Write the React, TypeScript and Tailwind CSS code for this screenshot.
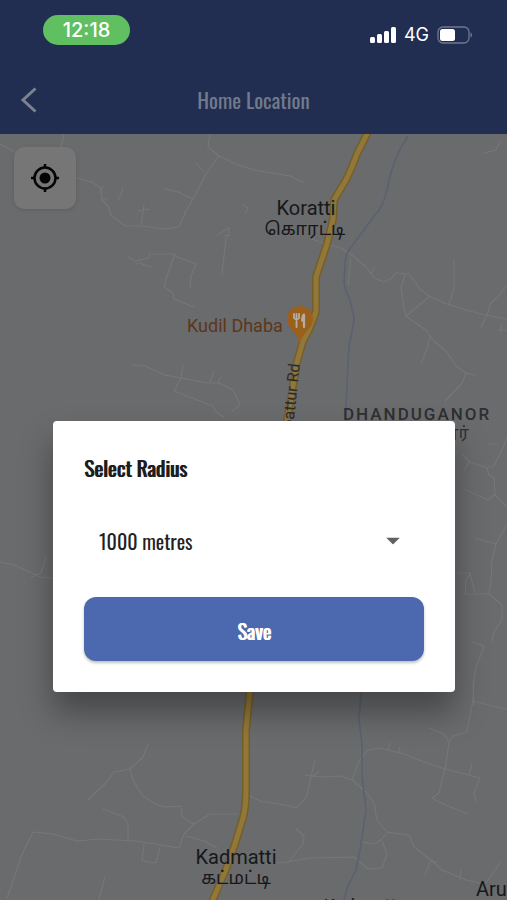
import { useState } from "react";
import type { FormEvent } from "react";

const RADII = ["500 metres", "1000 metres", "2000 metres", "5000 metres"];

const CONDENSED = "font-['Oswald','Liberation_Sans_Narrow','Roboto',sans-serif]";

const HIGHWAY =
  "M368 132 L357 154 Q352 168 346 180 L334 200 L333 219 L327 244 L316 277 L316 311 Q311 328 303 341 L297 362 L288 415 L262 600 L250 690 L246 730 L246 789 Q246 807 243 818 L235 844 L226 869 L212 902";

const LANES = [
  "M0 144 L15 152 L22 156",
  "M64 134 L61 147",
  "M77 178 L92 182 L101 188 L102 200 L108 206 L111 215 L125 226 L142 226 L165 229 L179 227 L186 211 L193 199 L206 174 L219 156",
  "M100 192 L103 186 M102 199 L108 199 M118 200 L122 192 L123 187",
  "M210 134 L208 147 L219 156 L236 164 L254 170 L290 176 L303 182",
  "M165 189 L178 192 L193 199 M196 163 L204 172",
  "M139 211 L149 209 M144 205 L141 226 M243 205 L248 208 L245 214",
  "M217 235 L229 228 L229 236 L224 235 M226 237 L222 275",
  "M128 257 L134 260 L137 264 M136 261 L149 258 L149 254 L175 254 L172 262 L167 276 L164 287 L173 293 L174 299 L194 307",
  "M175 256 L196 264 L191 276 L190 288 M139 263 L151 267",
  "M133 365 L145 366 L165 375 L181 378 L208 383 L219 383 L233 390 L240 405 L232 411",
  "M181 378 L174 391 L213 406 L216 412 L224 417 M181 378 L183 365 M210 382 L214 371 M218 382 L221 377",
  "M484 153 L496 150 L500 142",
  "M311 239 L327 244 L341 248 L353 256 L366 267 L374 278 L384 282 L392 278 L396 273 L409 274 L420 289 L429 296 L447 304 L466 310 L485 315 L507 319",
  "M351 258 L348 285 M371 274 L374 268 M405 275 L401 288 L404 307 L406 316 L429 297",
  "M406 316 L427 331 L434 341 L447 352 L456 366 L466 373 L462 383 L445 401 M466 373 L475 375",
  "M430 337 L427 349 L421 364 M454 260 L454 289 L449 304 M507 285 L498 297 L491 303 L487 315 L481 327",
  "M501 324 L501 332 M507 330 L498 330",
  "M470 461 L464 471 M463 455 L470 462 L487 468 L494 466 L502 450 L507 438 M488 444 L496 444",
  "M487 468 L489 475 L494 478 L495 495 L507 507 M464 489 L488 500 L494 495 M475 538 L496 544 L507 524 M496 544 L492 560 L491 580 L489 594 L465 594 L466 580 L470 574 L475 593",
  "M458 573 L471 573 M489 594 L502 605 L502 620 L494 632 L492 642 M472 642 L484 646 L476 668 L473 684 L474 706",
  "M0 562 L14 565 L40 577 L53 578 M31 577 L41 573 L46 557",
  "M148 744 L143 757 L130 769 L114 772 L106 783 L96 792 L88 800",
  "M130 769 L134 782 L143 796 L154 803 L164 807 L181 806 L182 817 L194 824 L184 834 L179 848 L155 844 L135 841 L99 839 L77 841 L53 834 L33 832 L23 852 L7 898",
  "M103 809 L124 817 L128 825 L128 841 M144 844 L142 861 L156 863 L160 848 M194 824 L210 814 L242 814",
  "M186 836 L204 841 L217 848 M105 877 L99 899 M248 795 L260 801 L285 805 L296 808 L307 796 L311 776 L315 760",
  "M305 775 L320 777 L340 776 L352 780 L359 761 L368 750 L380 748 L404 754 L424 762 L445 769 L469 775 L480 778 L474 793 L476 802",
  "M311 777 L319 772 M388 750 L390 743 M398 753 L400 747 M469 775 L472 764 M429 728 L444 734 L449 742 L446 764 L439 793 L432 798 L443 804 L468 814",
  "M352 780 L366 792 L374 803 L377 820 L387 832 L409 835 L414 847 L431 860 L442 870 L466 880 L485 884 L500 863",
  "M362 842 L375 844 L382 839 L388 832 M382 841 L387 854 L382 868 L368 869 L354 857 L309 858 L288 862 L260 864",
  "M289 861 L303 844 L304 836 L296 829 M449 742 L453 736 L467 732 L473 700 L474 680 M474 701 L492 706 L507 709",
  "M425 875 L430 862 L437 862 M460 879 L461 870",
];

function SignalIcon() {
  return (
    <svg className="h-4 w-6.5" viewBox="0 0 26 16" fill="white" aria-label="Signal">
      <rect x="0" y="10" width="5" height="6" rx="1.5" />
      <rect x="7" y="7" width="5" height="9" rx="1.5" />
      <rect x="14" y="4" width="5" height="12" rx="1.5" />
      <rect x="21" y="0" width="5" height="16" rx="1.5" />
    </svg>
  );
}

function BatteryIcon() {
  return (
    <svg className="h-[18px] w-9" viewBox="0 0 36 18" aria-label="Battery">
      <rect x="1" y="1" width="31" height="16" rx="5" fill="none" stroke="#6f7890" strokeWidth="1.3" />
      <rect x="3" y="3" width="15" height="12" rx="2.5" fill="white" />
      <path d="M33.5 6.5 C35.5 7 35.5 11 33.5 11.5 Z" fill="#6f7890" />
    </svg>
  );
}

function MapCanvas() {
  return (
    <svg
      className="absolute inset-0 h-full w-full font-['Roboto','Noto_Sans_Tamil',sans-serif]"
      viewBox="0 134 507 766"
      preserveAspectRatio="xMidYMin slice"
      role="img"
      aria-label="Map"
    >
      <g fill="none" strokeLinejoin="round" strokeLinecap="round">
        <path d={LANES.join(" ")} stroke="#757779" strokeWidth="1.1" />
        <path
          d="M408 136 L398 153 L391 172 L387 190 Q383 207 375 215 L349 250 Q345 256 345 265 L344 282 Q344 288 350 300 L354 317 Q354 325 349 345 L346 405 L352 560 L361 693 L359 720 L362 745 L362 775 L366 810 L363 830 L360 850 L356 870 L347 888 L344 900"
          stroke="#5a6170"
          strokeWidth="1.6"
        />
        <path d={HIGHWAY} stroke="#765e2a" strokeWidth="8" />
        <path d={HIGHWAY} stroke="#927838" strokeWidth="5" />
      </g>

      <path
        d="M300 306 C292.500 306 287 311.500 287 319 C287 329 297 331 300 344 C303 331 313 329 313 319 C313 311.500 307.500 306 300 306 Z"
        fill="#9b601b"
      />
      <g fill="none" stroke="#b6ada3" strokeLinecap="round">
        <path d="M294 314 V318 M296.500 314 V318 M299 314 V318 M294 318 Q296.500 321 299 318 M296.500 319 V327" strokeWidth="1.800" />
        <path d="M304 315 V327" strokeWidth="2.200" />
        <path d="M304 314 Q301.500 316 302 321 H304" strokeWidth="1.500" fill="#b6ada3" />
      </g>

      <g fontSize="20" textAnchor="middle" fill="#17181a" stroke="#6a6b6d" strokeWidth="1" paintOrder="stroke">
        <text x="306" y="215">Koratti</text>
        <text x="305" y="235" fontSize="18">கொரட்டி</text>
        <text x="236" y="864">Kadmatti</text>
        <text x="236" y="884" fontSize="18">கட்மட்டி</text>
        <text x="476" y="896" textAnchor="start">Aru</text>
        <text x="365" y="912" fontSize="18">Kudapattu</text>
      </g>
      <text x="187" y="332" fontSize="18" fill="#5c371b">Kudil Dhaba</text>
      <text transform="translate(300 364) rotate(-84)" textAnchor="end" fontSize="16" fill="#33291a" stroke="#6a6b6d" strokeWidth="1" paintOrder="stroke">
        Tirupattur Rd
      </text>
      <g fill="#2e2f31" fontSize="17">
        <text x="343" y="420" className="font-medium tracking-[2px]">DHANDUGANOR</text>
        <text x="469" y="438" fontSize="16" textAnchor="end">தண்டுகனூர்</text>
      </g>
    </svg>
  );
}

function RadiusDialog() {
  const [radius, setRadius] = useState("1000 metres");
  const save = (event: FormEvent) => event.preventDefault();

  return (
    <form
      role="dialog"
      aria-labelledby="radius-label"
      onSubmit={save}
      className={`relative w-full rounded bg-white p-[31px] shadow-[0_20px_32px_0_rgba(0,0,0,0.35)] ${CONDENSED}`}
    >
      <label
        id="radius-label"
        htmlFor="radius"
        className="block text-[21px] leading-8 text-[#1d1d1d] [text-shadow:1px_0_0_currentColor]"
      >
        Select Radius
      </label>
      <div className="relative mt-7 mb-[27px]">
        <select
          id="radius"
          value={radius}
          onChange={(event) => setRadius(event.target.value)}
          className="h-[58px] w-full appearance-none bg-transparent px-[15px] text-[20px] text-[#222222] outline-none"
        >
          {RADII.map((option) => (
            <option key={option}>{option}</option>
          ))}
        </select>
        <svg className="pointer-events-none absolute top-1/2 right-6 h-[7px] w-[14px] -translate-y-1/2" viewBox="0 0 14 7" fill="#616161">
          <path d="M0 0 H14 L7 7 Z" />
        </svg>
      </div>
      <button
        type="submit"
        className="block h-16 w-full rounded-xl bg-[#4c69b0] pt-1 text-[20px] text-white shadow-[0_2px_3px_rgba(0,0,0,0.25)]"
      >
        <span className="[text-shadow:1px_0_0_currentColor]">Save</span>
      </button>
    </form>
  );
}

export default function App() {
  return (
    <div className="relative flex min-h-screen flex-col overflow-hidden bg-[#6a6b6d] font-['Inter','Liberation_Sans',sans-serif]">
      <header className="bg-[#212e52]">
        <div className="flex h-[66px] items-start justify-between pt-[15px] pr-[34px] pl-[43px]">
          <time className="flex h-[30px] w-[87px] items-center justify-center rounded-full bg-[#60bf60] text-[20px] font-medium text-white">
            12:18
          </time>
          <div className="flex items-center gap-2 pt-2">
            <SignalIcon />
            <span className="text-lg leading-6 text-white">4G</span>
            <BatteryIcon />
          </div>
        </div>
        <div className="grid h-[68px] grid-cols-[1fr_auto_1fr] items-center px-5">
          <button type="button" aria-label="Back" className="justify-self-start">
            <svg className="h-7 w-[18px]" viewBox="0 0 18 28" fill="none" stroke="#7c8290" strokeWidth="3">
              <path d="M15.500 2.500 L3 14 L15.500 25.500" />
            </svg>
          </button>
          <h1 className={`text-[21px] text-[#737a8b] ${CONDENSED}`}>Home Location</h1>
        </div>
      </header>

      <main className="relative flex-1">
        <MapCanvas />
        <button
          type="button"
          aria-label="My location"
          className="absolute top-[13px] left-[14px] flex size-[62px] items-center justify-center rounded-[10px] bg-[#767676] shadow-[0_1px_4px_rgba(0,0,0,0.12)]"
        >
          <svg className="size-[30px]" viewBox="0 0 30 30" fill="none" stroke="#050505" strokeWidth="2.500">
            <circle cx="15" cy="15" r="10.500" />
            <circle cx="15" cy="15" r="5.500" fill="#050505" stroke="none" />
            <path d="M15 1 V5 M15 25 V29 M1 15 H5 M25 15 H29" />
          </svg>
        </button>
        <div className="pt-[287px] pr-[52px] pb-8 pl-[53px]">
          <RadiusDialog />
        </div>
      </main>
    </div>
  );
}
